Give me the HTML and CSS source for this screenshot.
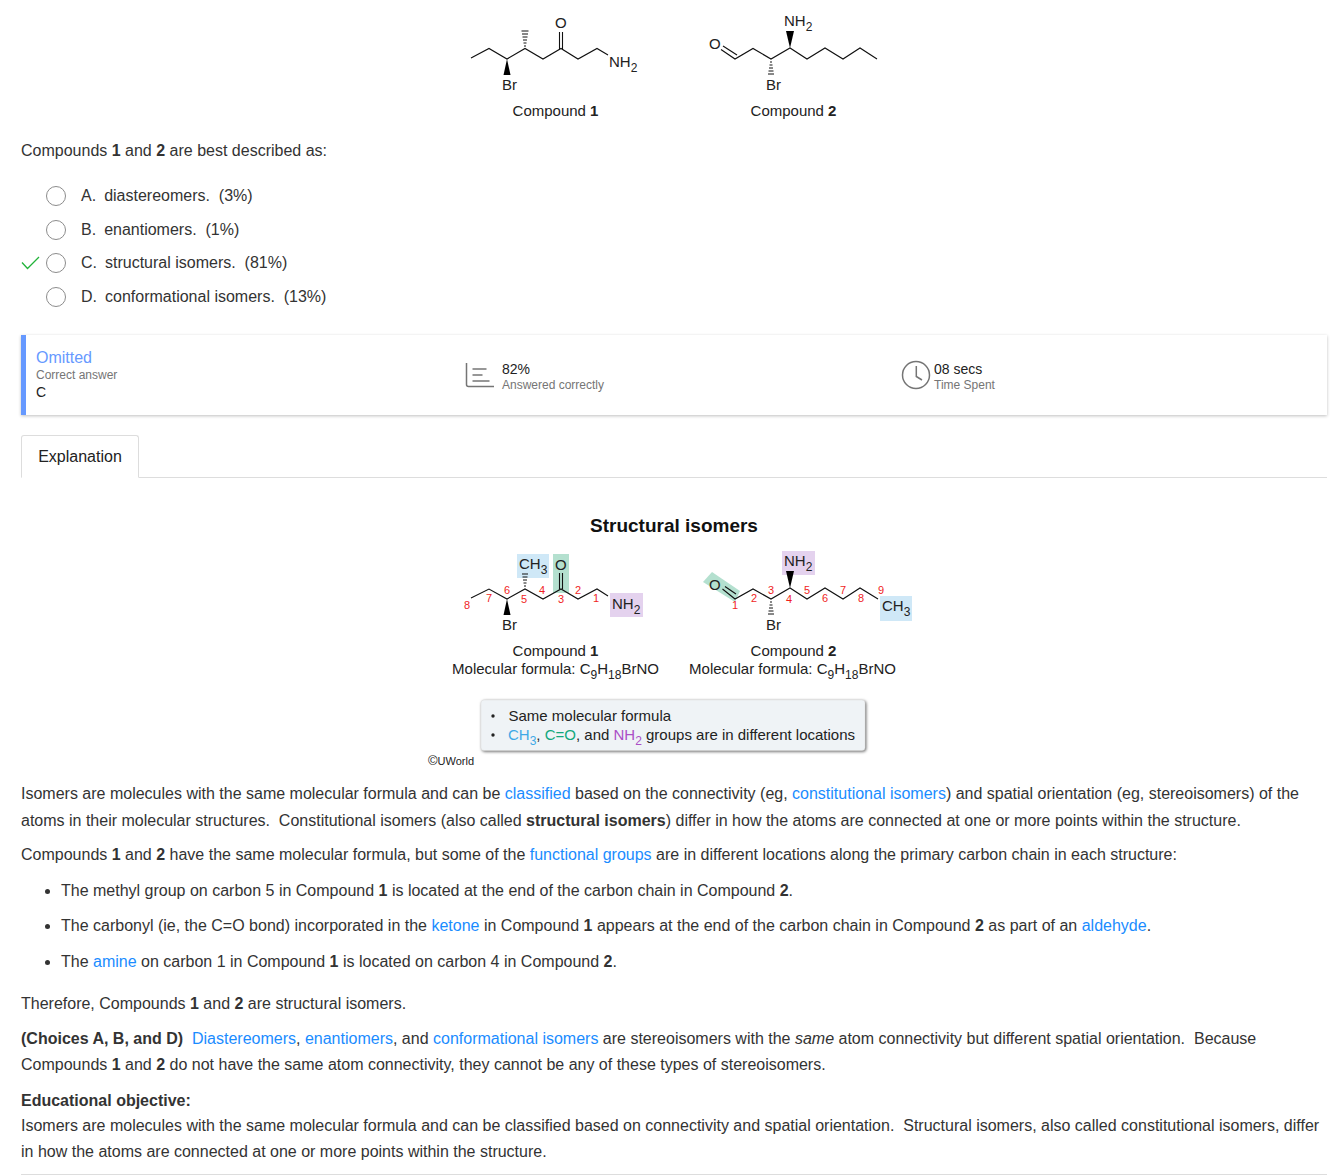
FILE: index.html
```html
<!DOCTYPE html>
<html lang="en">
<head>
    <meta charset="UTF-8">
    <meta name="viewport" content="width=device-width, initial-scale=1.0">
    <title>Structural isomers</title>
    <link rel="stylesheet" href="styles.css">
</head>
<body>
    <!-- Question figure -->
    <svg class="figure figure-top" viewBox="424 0 500 125">
        <g class="bond">
            <polyline points="471,58 489,48.500 507,59 525,48.500 543,59 561,48.500 578,59 597,48.500 608,55"/>
            <line x1="559.500" y1="49" x2="559.500" y2="32"/>
            <line x1="562.500" y1="49" x2="562.500" y2="32"/>
            <line x1="723" y1="46" x2="737" y2="55"/>
            <polyline points="721,49.500 735,59 753,48.500 771,59 790,48 807,59 825,48 843,59 860,48 877,59"/>
        </g>
        <polygon class="wedge" points="507,59 503.500,75 510.500,75"/>
        <polygon class="wedge" points="790,48 786,31 794,31"/>
        <g class="hash">
            <line x1="524" y1="46" x2="526" y2="46"/><line x1="523.500" y1="43" x2="526.500" y2="43"/><line x1="523" y1="40" x2="527" y2="40"/><line x1="522.500" y1="37" x2="527.500" y2="37"/><line x1="522" y1="34" x2="528" y2="34"/><line x1="521.500" y1="31" x2="528.500" y2="31"/>
            <line x1="770" y1="62" x2="772" y2="62"/><line x1="769.500" y1="65" x2="772.500" y2="65"/><line x1="769" y1="68" x2="773" y2="68"/><line x1="768.500" y1="71" x2="773.500" y2="71"/><line x1="768" y1="74" x2="774" y2="74"/>
        </g>
        <g class="atom">
            <text x="555" y="28">O</text>
            <text x="609" y="66.500">NH<tspan class="sub" dy="5">2</tspan></text>
            <text x="502" y="90">Br</text>
            <text x="709" y="49">O</text>
            <text x="784" y="25.500">NH<tspan class="sub" dy="5">2</tspan></text>
            <text x="766" y="90">Br</text>
        </g>
        <text class="cap" x="555.500" y="115.500">Compound <tspan class="strong">1</tspan></text>
        <text class="cap" x="793.500" y="115.500">Compound <tspan class="strong">2</tspan></text>
    </svg>

    <p class="stem">Compounds <b>1</b> and <b>2</b> are best described as:</p>

    <div class="choices">
        <div class="choice"><span class="tick"></span><span class="radio"></span><span class="letter">A.</span><span>diastereomers.&nbsp; (3%)</span></div>
        <div class="choice"><span class="tick"></span><span class="radio"></span><span class="letter">B.</span><span>enantiomers.&nbsp; (1%)</span></div>
        <div class="choice">
            <span class="tick">
                <svg width="20" height="14" viewBox="0 0 20 14"><polyline points="1,6.500 6.500,12.500 18,1" fill="none" stroke="#22b33a" stroke-width="1.300"/></svg>
            </span>
            <span class="radio"></span><span class="letter">C.</span><span>structural isomers.&nbsp; (81%)</span>
        </div>
        <div class="choice"><span class="tick"></span><span class="radio"></span><span class="letter">D.</span><span>conformational isomers.&nbsp; (13%)</span></div>
    </div>

    <div class="stats">
        <div class="stat stat-answer">
            <div class="omitted">Omitted</div>
            <div class="stat-label">Correct answer</div>
            <div class="stat-value">C</div>
        </div>
        <div class="stat stat-pct">
            <svg width="30" height="26" viewBox="0 0 30 26" fill="none" stroke="#757575" stroke-width="1.500">
                <path d="M1.500 1v21.500q0 2 2 2H29"/>
                <path d="M7.500 7h14M7.500 13h10M7.500 19h17"/>
            </svg>
            <div class="stat-body">
                <div class="stat-value">82%</div>
                <div class="stat-label">Answered correctly</div>
            </div>
        </div>
        <div class="stat stat-time">
            <svg width="30" height="30" viewBox="0 0 30 30" fill="none" stroke="#757575" stroke-width="1.500">
                <circle cx="15" cy="15" r="13.500"/>
                <path d="M15.300 6v10.500l5.700 3.500"/>
            </svg>
            <div class="stat-body">
                <div class="stat-value">08 secs</div>
                <div class="stat-label">Time Spent</div>
            </div>
        </div>
    </div>

    <div class="tabs"><div class="tab">Explanation</div></div>

    <h3 class="fig-title">Structural isomers</h3>

    <!-- Explanation figure -->
    <svg class="figure figure-main" viewBox="424 545 500 228">
        <rect class="hl-blue" x="517" y="554" width="32" height="24"/>
        <rect class="hl-green" x="553" y="554" width="16" height="39"/>
        <rect class="hl-purple" x="610" y="593" width="33" height="24"/>
        <polygon class="hl-green-poly" points="703,582 712,572 740,591 735,602"/>
        <rect class="hl-purple" x="782" y="551" width="33" height="24"/>
        <rect class="hl-blue" x="880" y="596" width="32" height="25"/>
        <g class="bond">
            <polyline points="471,598 489,589 507,599 525,589 543,599 561,589 578,599 597,589 608,596"/>
            <line x1="559.500" y1="589" x2="559.500" y2="573"/>
            <line x1="562.500" y1="589" x2="562.500" y2="573"/>
            <line x1="725" y1="586.500" x2="736" y2="594"/>
            <polyline points="722.500,589 735,599 753,589 771,599 790,588 807,599 825,588 843,599 860,588 878,599"/>
        </g>
        <polygon class="wedge" points="507,599 503.500,615 510.500,615"/>
        <polygon class="wedge" points="790,588 786,571 794,571"/>
        <g class="hash">
            <line x1="524" y1="586" x2="526" y2="586"/><line x1="523.500" y1="583" x2="526.500" y2="583"/><line x1="523" y1="580" x2="527" y2="580"/><line x1="522.500" y1="577" x2="527.500" y2="577"/><line x1="522" y1="574" x2="528" y2="574"/>
            <line x1="770" y1="602" x2="772" y2="602"/><line x1="769.500" y1="605" x2="772.500" y2="605"/><line x1="769" y1="608" x2="773" y2="608"/><line x1="768.500" y1="611" x2="773.500" y2="611"/><line x1="768" y1="614" x2="774" y2="614"/>
        </g>
        <g class="atom">
            <text x="519" y="569">CH<tspan class="sub" dy="5">3</tspan></text>
            <text x="555" y="569.500">O</text>
            <text x="612" y="608.500">NH<tspan class="sub" dy="5">2</tspan></text>
            <text x="502" y="630">Br</text>
            <text x="709" y="590">O</text>
            <text x="784" y="566">NH<tspan class="sub" dy="5">2</tspan></text>
            <text x="882" y="611">CH<tspan class="sub" dy="5">3</tspan></text>
            <text x="766" y="630">Br</text>
        </g>
        <g class="num">
            <text x="467" y="609">8</text><text x="489" y="602">7</text><text x="507" y="594">6</text><text x="524" y="603">5</text><text x="542" y="594">4</text><text x="561" y="603">3</text><text x="578" y="594">2</text><text x="596" y="602">1</text>
            <text x="735" y="609">1</text><text x="754" y="602">2</text><text x="771" y="594">3</text><text x="789" y="603">4</text><text x="807" y="594">5</text><text x="825" y="602">6</text><text x="843" y="594">7</text><text x="861" y="602">8</text><text x="881" y="594">9</text>
        </g>
        <text class="cap" x="555.500" y="656">Compound <tspan class="strong">1</tspan></text>
        <text class="cap" x="555.500" y="674">Molecular formula: C<tspan class="sub" dy="5">9</tspan><tspan dy="-5">H</tspan><tspan class="sub" dy="5">18</tspan><tspan dy="-5">BrNO</tspan></text>
        <text class="cap" x="793.500" y="656">Compound <tspan class="strong">2</tspan></text>
        <text class="cap" x="792.500" y="674">Molecular formula: C<tspan class="sub" dy="5">9</tspan><tspan dy="-5">H</tspan><tspan class="sub" dy="5">18</tspan><tspan dy="-5">BrNO</tspan></text>

        <rect class="callout" x="481" y="700" width="384" height="50.500" rx="3"/>
        <g class="note">
            <circle cx="493" cy="716" r="1.700"/>
            <circle cx="493" cy="735" r="1.700"/>
            <text x="508.500" y="721">Same molecular formula</text>
            <text x="508" y="739.500"><tspan class="c-blue">CH</tspan><tspan class="c-blue sub" dy="5">3</tspan><tspan dy="-5">, </tspan><tspan class="c-green">C=O</tspan>, and <tspan class="c-purple">NH</tspan><tspan class="c-purple sub" dy="5">2</tspan><tspan dy="-5"> groups are in different locations</tspan></text>
        </g>
        <text class="copy" x="428" y="765"><tspan class="copy-mark">©</tspan>UWorld</text>
    </svg>

    <div class="explain">
        <p class="tight">Isomers are molecules with the same molecular formula and can be <a>classified</a> based on the connectivity (eg, <a>constitutional isomers</a>) and spatial orientation (eg, stereoisomers) of the atoms in their molecular structures.&nbsp; Constitutional isomers (also called <b>structural isomers</b>) differ in how the atoms are connected at one or more points within the structure.</p>
        <p>Compounds <b>1</b> and <b>2</b> have the same molecular formula, but some of the <a>functional groups</a> are in different locations along the primary carbon chain in each structure:</p>
        <ul>
            <li>The methyl group on carbon 5 in Compound <b>1</b> is located at the end of the carbon chain in Compound <b>2</b>.</li>
            <li>The carbonyl (ie, the C=O bond) incorporated in the <a>ketone</a> in Compound <b>1</b> appears at the end of the carbon chain in Compound <b>2</b> as part of an <a>aldehyde</a>.</li>
            <li>The <a>amine</a> on carbon 1 in Compound <b>1</b> is located on carbon 4 in Compound <b>2</b>.</li>
        </ul>
        <p class="therefore">Therefore, Compounds <b>1</b> and <b>2</b> are structural isomers.</p>
        <p><b>(Choices A, B, and D)</b>&nbsp; <a>Diastereomers</a>, <a>enantiomers</a>, and <a>conformational isomers</a> are stereoisomers with the <i>same</i> atom connectivity but different spatial orientation.&nbsp; Because Compounds <b>1</b> and <b>2</b> do not have the same atom connectivity, they cannot be any of these types of stereoisomers.</p>
        <p class="objective"><b>Educational objective:</b><br>Isomers are molecules with the same molecular formula and can be classified based on connectivity and spatial orientation.&nbsp; Structural isomers, also called constitutional isomers, differ in how the atoms are connected at one or more points within the structure.</p>
    </div>
    <hr class="end-rule">
</body>
</html>
```

FILE: styles.css
```css
body {
    margin: 0;
    padding: 0 16px 0 21px;
    overflow: hidden;
    background: #fff;
    color: #333;
    font-family: "Liberation Sans", Arial, sans-serif;
    font-size: 16px;
}
.figure {
    display: block;
    width: 500px;
    margin: 0 auto;
}
.figure-top {
    height: 125px;
}
.figure-main {
    height: 228px;
    margin-top: 9px;
}
.bond polyline, .bond line {
    fill: none;
    stroke: #111;
    stroke-width: 1.100;
}
.wedge {
    fill: #000;
}
.hash line {
    stroke: #111;
    stroke-width: 1;
}
.atom text {
    font-size: 15px;
    fill: #222;
}
.sub {
    font-size: 12px;
}
.num text {
    font-size: 11px;
    fill: #f01e1e;
    text-anchor: middle;
}
.cap {
    font-size: 15px;
    fill: #222;
    text-anchor: middle;
}
.strong {
    font-weight: bold;
}
.hl-blue {
    fill: #cfe8f7;
}
.hl-green, .hl-green-poly {
    fill: #b4e0cf;
}
.hl-purple {
    fill: #e4d2ee;
}
.callout {
    fill: #eff3f6;
    stroke: #ddd;
    stroke-width: 0.500;
    filter: drop-shadow(1px 1px 1.500px rgba(0, 0, 0, 0.6));
}
.note text {
    font-size: 15px;
    fill: #222;
}
.note circle {
    fill: #222;
}
.note .c-blue {
    fill: #3fa9e6;
}
.note .c-green {
    fill: #12a87c;
}
.note .c-purple {
    fill: #ab4fc6;
}
.copy {
    font-size: 11px;
    fill: #222;
}
.copy-mark {
    font-size: 13px;
}
.stem {
    margin: 16px 0 0;
    line-height: 20px;
}
.choices {
    margin-top: 18px;
}
.choice {
    display: flex;
    align-items: center;
    height: 33.700px;
}
.tick {
    width: 25px;
    display: flex;
    align-items: center;
}
.radio {
    width: 18px;
    height: 18px;
    border: 1px solid #8c8c8c;
    border-radius: 50%;
    margin-right: 15px;
}
.letter {
    margin-right: 8px;
}
.stats {
    display: flex;
    align-items: center;
    height: 80px;
    margin-top: 21px;
    border-left: 5px solid #6699ff;
    box-shadow: 0 1px 3px rgba(0, 0, 0, 0.25);
}
.stat {
    display: flex;
    align-items: center;
    gap: 7px;
    font-size: 12px;
}
.stat-answer {
    display: block;
    width: 429px;
    margin-left: 10px;
}
.stat-pct {
    width: 436px;
}
.stat-time {
    gap: 3px;
}
.stat-body {
    padding-top: 4px;
}
.omitted {
    font-size: 16px;
    color: #6699ff;
    line-height: 20px;
}
.stat-label {
    color: #757575;
    line-height: 15px;
}
.stat-value {
    font-size: 14px;
    color: #222;
    line-height: 17px;
}
.stat-answer .stat-value {
    line-height: 18px;
}
.tabs {
    margin-top: 20px;
    border-bottom: 1px solid #ddd;
    height: 42px;
}
.tab {
    box-sizing: border-box;
    width: 118px;
    height: 43px;
    border: 1px solid #ddd;
    border-bottom-color: #fff;
    border-radius: 3px 3px 0 0;
    text-align: center;
    line-height: 41px;
    color: #222;
}
.fig-title {
    margin: 37px 0 0;
    font-size: 19px;
    line-height: 21px;
    text-align: center;
    color: #111;
}
.explain {
    margin-top: 7px;
}
.explain p {
    margin: 0 0 10px;
    line-height: 26px;
}
.explain .tight {
    line-height: 27px;
    margin-bottom: 8px;
}
.explain .therefore {
    margin-bottom: 9px;
}
.explain a {
    color: #1a8cff;
}
.explain ul {
    margin: 0 0 16px;
    padding-left: 40px;
}
.explain li {
    line-height: 26px;
    margin-bottom: 9.700px;
}
.explain .objective {
    line-height: 25.500px;
    margin-top: -0.500px;
    margin-bottom: 10px;
}
.end-rule {
    margin: 0;
    border: 0;
    border-top: 1px solid #ddd;
}
```
